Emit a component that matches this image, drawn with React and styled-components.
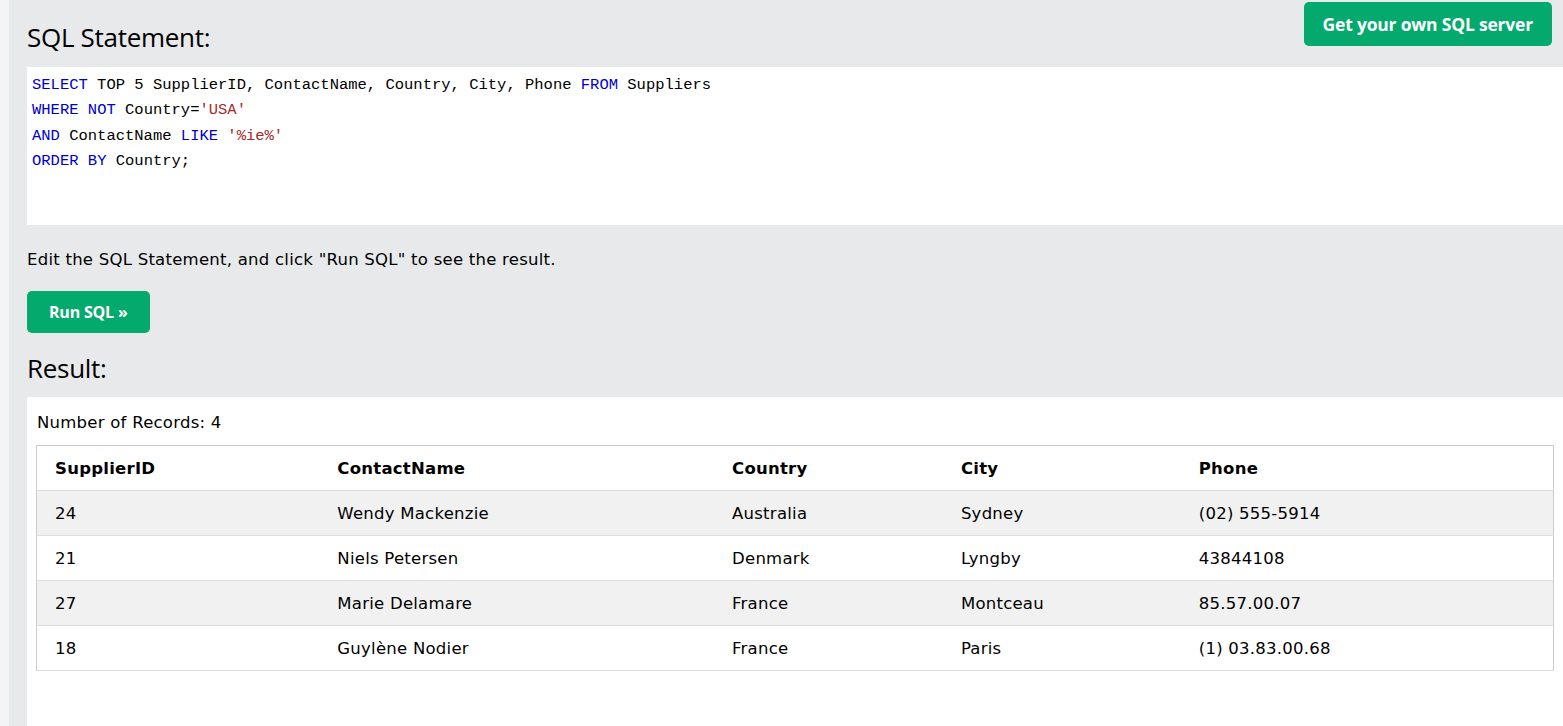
import styled, { createGlobalStyle } from 'styled-components'

const GlobalStyle = createGlobalStyle`
  html, body {
    margin: 0;
    padding: 0;
    background: #ffffff;
  }
  body {
    font-family: 'DejaVu Sans', 'Noto Sans', sans-serif;
    color: #000000;
  }
`

const Page = styled.div`
  display: flex;
  min-height: 100vh;
  overflow: hidden;
`

const Strip = styled.div`
  width: 9px;
  flex: none;
  background: #f4f4f4;
`

const Panel = styled.div`
  flex: 1;
  display: flex;
  flex-direction: column;
  background: #e7e9eb;
  padding-left: 18px;
  min-width: 0;
`

const HeadRow = styled.div`
  display: flex;
  justify-content: space-between;
  align-items: flex-start;
  height: 67px;
`

const Heading = styled.h2`
  margin: ${props => props.top || 0}px 0 0;
  font-family: "Open Sans", "Noto Sans", sans-serif;
  font-weight: 400;
  font-size: 26px;
  line-height: 30px;
  letter-spacing: -0.3px;
  color: #000000;
`

const GreenButton = styled.button`
  border: none;
  background: #04aa6d;
  color: #ffffff;
  font-family: "Open Sans", "Noto Sans", sans-serif;
  font-weight: 700;
  font-size: ${props => props.size || 17}px;
  letter-spacing: -0.2px;
  border-radius: 5px;
  cursor: pointer;
  height: ${props => props.height}px;
  padding: 0 ${props => props.pad}px;
`

const TopButton = styled(GreenButton)`
  margin: 2px 11px 0 0;
`

const RunButton = styled(GreenButton)`
  margin-top: 21px;
  align-self: flex-start;
`

const CodeBox = styled.div`
  background: #ffffff;
  height: 158px;
  box-sizing: border-box;
  padding: 6px 5px 0;
  font-family: "Liberation Mono", "DejaVu Sans Mono", monospace;
  font-size: 15.5px;
  line-height: 25.4px;
  white-space: pre;
  color: #000000;
`

const Kw = styled.span`
  color: #0000cd;
`

const Str = styled.span`
  color: #a52a2a;
`

const Note = styled.div`
  margin-top: 25px;
  font-size: 16.5px;
  letter-spacing: 0.25px;
  line-height: 20px;
`

const ResultBox = styled.div`
  flex: 1;
  margin-top: 14px;
  background: #ffffff;
  padding: 16px 9px 40px;
`

const Count = styled.div`
  font-size: 16.5px;
  letter-spacing: 0.25px;
  line-height: 20px;
  padding-left: 1px;
`

const Table = styled.table`
  margin-top: 12px;
  width: 1518px;
  border-collapse: collapse;
  border: 1px solid #cccccc;
  font-size: 16.5px;
  letter-spacing: 0.25px;
`

const Row = styled.tr`
  background: ${props => (props.shade ? '#f1f1f1' : '#ffffff')};
  border-bottom: 1px solid #dddddd;
`

const Th = styled.th`
  text-align: left;
  font-weight: 700;
  padding: 13px 18px 11px;
  line-height: 20px;
`

const Td = styled.td`
  padding: 13px 18px 11px;
  line-height: 20px;
`

const widths = [283, 395, 229, 238, 373]
const columns = ['SupplierID', 'ContactName', 'Country', 'City', 'Phone']
const records = [
  ['24', 'Wendy Mackenzie', 'Australia', 'Sydney', '(02) 555-5914'],
  ['21', 'Niels Petersen', 'Denmark', 'Lyngby', '43844108'],
  ['27', 'Marie Delamare', 'France', 'Montceau', '85.57.00.07'],
  ['18', 'Guylène Nodier', 'France', 'Paris', '(1) 03.83.00.68']
]

export default function App() {
  return (
    <>
      <GlobalStyle />
      <Page>
        <Strip />
        <Panel>
          <HeadRow>
            <Heading top={22}>SQL Statement:</Heading>
            <TopButton height={44} pad={19} size={17.5}>Get your own SQL server</TopButton>
          </HeadRow>
          <CodeBox>
            <Kw>SELECT</Kw> TOP 5 SupplierID, ContactName, Country, City, Phone <Kw>FROM</Kw> Suppliers{'\n'}
            <Kw>WHERE</Kw> <Kw>NOT</Kw> Country=<Str>'USA'</Str>{'\n'}
            <Kw>AND</Kw> ContactName <Kw>LIKE</Kw> <Str>'%ie%'</Str>{'\n'}
            <Kw>ORDER</Kw> <Kw>BY</Kw> Country;
          </CodeBox>
          <Note>Edit the SQL Statement, and click "Run SQL" to see the result.</Note>
          <RunButton height={42} pad={22} size={16}>Run SQL »</RunButton>
          <Heading top={20}>Result:</Heading>
          <ResultBox>
            <Count>Number of Records: 4</Count>
            <Table>
              <colgroup>
                {widths.map((w, i) => <col key={i} style={{ width: w }} />)}
              </colgroup>
              <thead>
                <Row>
                  {columns.map(c => <Th key={c}>{c}</Th>)}
                </Row>
              </thead>
              <tbody>
                {records.map((r, i) => (
                  <Row key={r[0]} shade={i % 2 === 0}>
                    {r.map((v, j) => <Td key={j}>{v}</Td>)}
                  </Row>
                ))}
              </tbody>
            </Table>
          </ResultBox>
        </Panel>
      </Page>
    </>
  )
}
